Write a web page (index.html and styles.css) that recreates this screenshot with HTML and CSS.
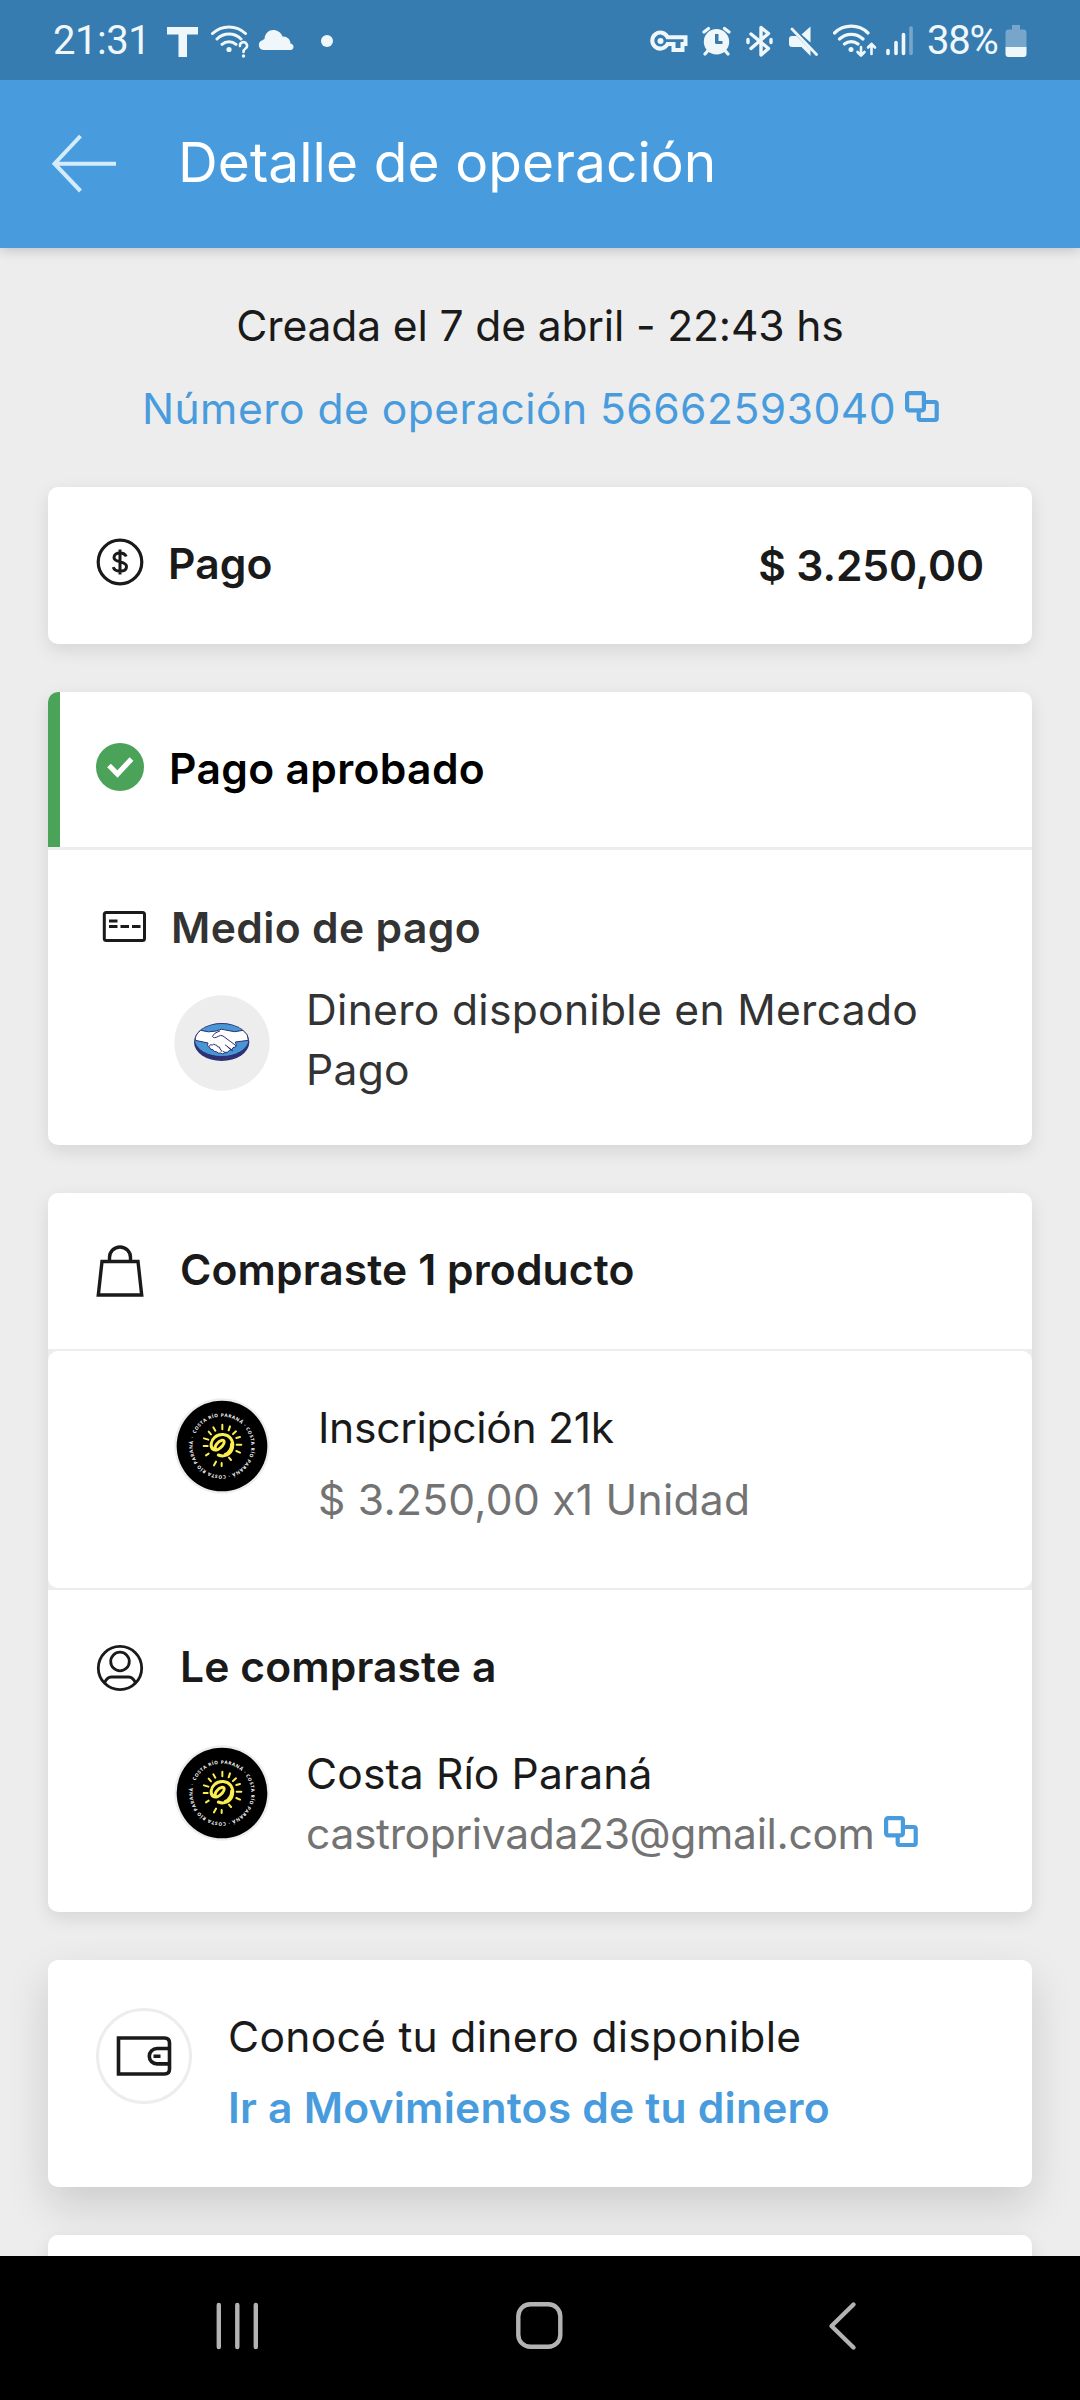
FILE: index.html
```html
<!DOCTYPE html>
<html lang="es">
<head>
<meta charset="utf-8">
<title>Detalle de operación</title>
<link rel="stylesheet" href="styles.css">
</head>
<body>
<div class="screen">
  <div class="status">
    <div class="status-group">
      <span class="clock">21:31</span>
      <svg width="31" height="80" viewBox="167 0 31 80"><path d="M167 27h31v7.500h-11V57h-8.500V34.500H167z"/></svg>
      <svg class="gap-13" width="38" height="80" viewBox="211 0 38 80">
        <g class="line" stroke-width="3"><path d="M212.500 33.500a24 24 0 0 1 33 0M217 39a17 17 0 0 1 24 0M222 44.300a10.500 10.500 0 0 1 14 0"/><path stroke-width="2.600" d="M240 46a3.500 3.500 0 1 1 5.500 2.500q-2 1.400-2 3.500"/></g>
        <circle cx="229" cy="49.500" r="2.600"/><circle cx="243.500" cy="56" r="1.700"/>
      </svg>
      <svg class="gap-9" width="37" height="80" viewBox="258 0 37 80"><path d="M263.500 50a5 5 0 0 1-1-9.800 6 6 0 0 1 2-1.200c1-12 15-11 18-2.500 4-.5 8 2.500 8 7 4 .5 4 6.500 0 6.500z"/></svg>
      <svg class="gap-26" width="12" height="80" viewBox="321 0 12 80"><circle cx="327" cy="41" r="6"/></svg>
    </div>
    <div class="status-group">
      <svg width="38" height="80" viewBox="650 0 38 80"><g class="line" stroke-width="4"><path stroke-linecap="butt" stroke-linejoin="miter" d="M667.500 37.200H685.500V44h-3v6H673.500V44h-6a8 8 0 1 1 0-6.800z"/></g><circle cx="660.500" cy="41" r="3"/></svg>
      <svg class="gap-14" width="29" height="80" viewBox="702 0 29 80"><path fill-rule="evenodd" d="M716.500 29a12.700 12.700 0 1 1 0 25.400a12.700 12.700 0 1 1 0-25.400zM715 34v8.500q0 1.500 1.500 1.500h6v-3H718.500v-7z"/><path class="line" stroke-width="3.200" d="M704 32l4.500-3.500M729 32l-4.500-3.500M708.500 50l-3.500 4M724.500 50l3.500 4"/></svg>
      <svg class="gap-15" width="28" height="80" viewBox="746 0 28 80"><path class="line" stroke-width="3.400" d="M751 34l17.500 14.500-7.500 6.500V27.500l7.500 6L751 48.500M748 39.500v3M771 39.500v3"/></svg>
      <svg class="gap-15" width="29" height="80" viewBox="789 0 29 80"><path d="M789 39q0-3 3-3h4.500l14 14v6l-9-9h-9.500q-3 0-3-3zM801.500 34.500l9-8v16z"/><path class="line" stroke-width="2.800" d="M792 29l24.500 25.500"/></svg>
      <svg class="gap-15" width="44" height="80" viewBox="833 0 44 80">
        <g class="line" stroke-width="3.200"><path d="M834.500 33a24 24 0 0 1 33.500 0M839.500 39a17 17 0 0 1 23.500 0M844.500 44a10.500 10.500 0 0 1 13.500 0"/><path stroke-width="2.600" d="M861 47v8.500m-3.500-3.500l3.500 3.700 3.500-3.700M871.500 54v-10m-3.500 3.500l3.500-3.700 3.500 3.700"/></g><circle cx="851" cy="49.500" r="2.500"/>
      </svg>
      <svg class="gap-9" width="28" height="80" viewBox="886 0 28 80"><g class="line" stroke-width="3.600"><path d="M888 50.500v3M896 42.500v11M903.500 34.500v19"/><path opacity=".35" d="M911 28v25.500"/></g></svg>
      <span class="battery-text">38%</span>
      <svg width="22" height="80" viewBox="1005 0 22 80"><path opacity=".35" d="M1012 25h8v4.500h3.500q3 0 3 3V47h-21V32.500q0-3 3-3h3.500z"/><path d="M1005.500 47h21v7q0 3-3 3h-15q-3 0-3-3z"/></svg>
    </div>
  </div>

  <header class="appbar">
    <svg width="66" height="60" viewBox="0 0 66 60"><path d="M30.500 2L4.500 29.700 30.500 57M5 29.700h61" fill="none" stroke="#d3ecfb" stroke-width="4"/></svg>
    <h1>Detalle de operación</h1>
  </header>

  <main>
    <div class="intro">
      <p class="created">Creada el 7 de abril - 22:43 hs</p>
      <a class="number"><span>Número de operación 56662593040</span>
        <svg class="copy" viewBox="0 0 34 31">
          <g id="copy" fill="none" stroke="#489cdd" stroke-width="4.200">
            <rect x="2.100" y="2.100" width="16.800" height="17.200" rx="2"/>
            <path d="M19 11h10.700a2 2 0 0 1 2 2v14a2 2 0 0 1-2 2H15.700a2 2 0 0 1-2-2V19.500"/>
          </g>
        </svg>
      </a>
    </div>

    <section class="card">
      <div class="row total">
        <svg class="icon" viewBox="0 0 48 48"><circle cx="24" cy="24" r="21.800" fill="none" stroke="#1a1a1a" stroke-width="3.200"/><path d="M30.200 18.500c-1-2.300-3.200-3.500-6.200-3.500-3.500 0-6 1.700-6 4.500 0 6 12.500 2.800 12.500 9 0 3-2.700 4.700-6.500 4.700-3.300 0-6-1.400-6.700-4M24 11.500v25" fill="none" stroke="#1a1a1a" stroke-width="3"/></svg>
        <h2>Pago</h2>
        <strong class="amount">$ 3.250,00</strong>
      </div>
    </section>

    <section class="card">
      <div class="row approved">
        <svg class="icon" viewBox="0 0 48 48"><circle cx="24" cy="24" r="24" fill="#4ba35a"/><path d="M13 22.500l8.500 8.500L35.500 16" fill="none" stroke="#fff" stroke-width="5.200"/></svg>
        <h2>Pago aprobado</h2>
      </div>
      <div class="row method">
        <svg class="icon" viewBox="0 0 48 48"><g fill="none" stroke="#1a1a1a" stroke-width="3"><rect x="8.300" y="8.500" width="40.200" height="28" rx="2"/><path d="M13 17h8.500M13 22.500h8.500M24.500 22.500h8.500M36 22.500h8.500"/></g></svg>
        <h2>Medio de pago</h2>
      </div>
      <div class="detail funds">
        <svg class="avatar" viewBox="-33 -42 288 288">
          <circle cx="111" cy="102" r="143" fill="#ededed"/>
          <ellipse cx="110" cy="99" rx="83" ry="57" fill="#2d3277"/>
          <ellipse cx="110" cy="93" rx="80" ry="48" fill="#4897d4"/>
          <path d="M47 64q25 8 46 2 17-10 33-2 22 8 48 0 17 12 16 30l-39 5 3 9q0 8-10 8-2 9-11 8-3 8-12 6-7 9-15 2-8 3-11-4-9 2-11-6-9 1-10-7-9-3-5-13l-38-8q-2-16 16-30z" fill="#fff" stroke="#2d3277" stroke-width="3"/>
          <path d="M104 66q-17 5-22 16 4 8 18 0 7-5 14-1l39 29M114 127l9 5M129 115l13 10M121 108l21 16M72 112q3-8 10-4 4-5 9 0 5-2 6 5 9-1 8 7 6 2 4 7" fill="none" stroke="#2d3277" stroke-width="3" stroke-linecap="round"/>
        </svg>
        <p>Dinero disponible en Mercado Pago</p>
      </div>
    </section>

    <section class="card">
      <div class="row bought">
        <svg class="icon bag" viewBox="0 0 48 52"><path d="M6 16.500h36L45.700 50H2.300zM13.500 16V12.500a10.500 10.500 0 0 1 21 0V16" fill="none" stroke="#1a1a1a" stroke-width="3.400"/></svg>
        <h2>Compraste 1 producto</h2>
      </div>
      <div class="product-wrap">
        <div class="detail product">
          <svg class="avatar" viewBox="42 42 288 288">
            <g id="brand">
              <circle cx="186" cy="186" r="143" fill="#ededed"/>
              <circle cx="186" cy="186" r="136" fill="#000"/>
              <path id="ring" d="M106 149.300a88 88 0 0 1 160 73.400a88 88 0 0 1-160-73.400" fill="none"/>
              <text class="ring-text"><textPath href="#ring" textLength="540">COSTA RÍO PARANÁ · COSTA RÍO PARANÁ · COSTA RÍO PARANÁ ·</textPath></text>
              <g fill="none" stroke="#fbee4f" stroke-linecap="round" stroke-linejoin="round">
                <path stroke-width="9" d="M167 195c-6-7 7-24 19-26 9-1 8 9 1 17-8 9-20 16-28 10-9-8-7-26 5-36 14-13 38-11 48 3 12 17 6 43-12 50-9 4-18 3-25 0"/>
                <path stroke-width="9" d="M196 211c13-6 19-18 19-32"/>
                <path stroke-width="6" d="M187 122v14M210 127l-4 12M228 142l-9 8M240 159l-11 3M244 182h-14M240 206l-11-5M213 228l-6-7M185 246v-9M168 233l-6 11M146 209l-8 5M143 186h-12M145 167l-13-4M153 151l-7-8M166 140l-6-10"/>
              </g>
            </g>
          </svg>
          <div>
            <p>Inscripción 21k</p>
            <p class="muted">$ 3.250,00 x1 Unidad</p>
          </div>
        </div>
      </div>
      <div class="row seller-title">
        <svg class="icon" viewBox="0 0 48 48"><g fill="none" stroke="#1a1a1a" stroke-width="2.800"><circle cx="24" cy="24" r="21.700"/><circle cx="24" cy="17.500" r="9.300"/><path d="M8.500 39.500c1.500-5 3.500-6.500 7-6.500h17c3.500 0 5.500 1.500 7 6.500"/></g></svg>
        <h2>Le compraste a</h2>
      </div>
      <div class="detail seller">
        <svg class="avatar" viewBox="42 42 288 288"><use href="#brand"/></svg>
        <div>
          <p>Costa Río Paraná</p>
          <p class="muted mail"><span>castroprivada23@gmail.com</span><svg class="copy" viewBox="0 0 34 31"><use href="#copy"/></svg></p>
        </div>
      </div>
    </section>

    <section class="card raised">
      <div class="wallet">
        <svg class="avatar" viewBox="0 0 96 96"><circle cx="48" cy="48" r="46.500" fill="none" stroke="#ededed" stroke-width="3"/><g fill="none" stroke="#1a1a1a" stroke-width="3.600"><path d="M22.500 30h46q5 0 5 5v26q0 5-5 5h-46z"/><path d="M73 40.500H61a7.700 7.700 0 0 0 0 15.400h12M57.500 48.200h7"/></g></svg>
        <div>
          <p>Conocé tu dinero disponible</p>
          <a>Ir a Movimientos de tu dinero</a>
        </div>
      </div>
    </section>

    <section class="card next"></section>
  </main>

  <nav class="navbar">
    <svg width="46" height="50" viewBox="0 0 46 50"><path d="M4.800 4v42M23.300 4v42M41.800 4v42"/></svg>
    <svg class="home" width="50" height="50" viewBox="0 0 50 50"><rect x="4.300" y="3.300" width="42" height="42.500" rx="12"/></svg>
    <svg class="back" width="34" height="50" viewBox="0 0 34 50"><path d="M28.500 3.500L6.500 25 28.500 46.500"/></svg>
  </nav>
</div>
</body>
</html>
```
FILE: styles.css
```css
* { box-sizing: border-box; margin: 0; padding: 0; }

body {
  width: 1080px;
  height: 2400px;
  overflow: hidden;
  background: #ededed;
  color: #1a1a1a;
  font: 400 42.6px/60px Inter, "Liberation Sans", sans-serif;
}

svg { display: block; flex: none; }

.screen { display: flex; flex-direction: column; height: 2400px; }

.status {
  display: flex;
  justify-content: space-between;
  height: 80px;
  padding: 0 53px;
  background: #367cb0;
  color: #f0f7fb;
  font: 400 40px/82.600px Roboto, sans-serif;
  z-index: 2;
}
.status svg { fill: #f0f7fb; }
.status .line { fill: none; stroke: #f0f7fb; stroke-linecap: round; stroke-linejoin: round; }
.status-group { display: flex; height: 80px; }
.clock { width: 114px; letter-spacing: -.5px; }
.battery-text { width: 78px; margin-left: 13px; letter-spacing: -1.200px; }
.gap-9 { margin-left: 9px; }
.gap-13 { margin-left: 13px; }
.gap-14 { margin-left: 14px; }
.gap-15 { margin-left: 15px; }
.gap-26 { margin-left: 26px; }

.appbar {
  display: flex;
  align-items: center;
  gap: 62px;
  height: 168px;
  padding-left: 50px;
  background: #489cdd;
  color: #fff;
  box-shadow: 0 2px 12px rgba(0, 0, 0, .2);
  z-index: 1;
}
.appbar h1 { padding-bottom: 5px; font-size: 55px; font-weight: 400; line-height: 70px; letter-spacing: .08px; }

main { flex: 1; overflow: hidden; }

.intro {
  display: flex;
  flex-direction: column;
  align-items: center;
  gap: 23px;
  padding: 48px 0;
}
.created { letter-spacing: -.16px; }
.number { display: flex; padding-left: 1px; letter-spacing: .46px; color: #489cdd; }
.number .copy { margin: 12px 0 0 9px; }
.copy { width: 34px; height: 31px; }

.card {
  margin: 0 48px 48px;
  border-radius: 10px;
  background: #fff;
  box-shadow: 0 6px 18px rgba(0, 0, 0, .1);
}
.raised { box-shadow: 0 18px 44px rgba(0, 0, 0, .14); }

h2 { font-size: 42.6px; font-weight: 600; letter-spacing: .1px; }
.row { display: flex; padding: 47px 48px 0; }
.icon { width: 48px; height: 48px; overflow: visible; }

.total { height: 157px; }
.total .icon { margin: 4px 24px 0 0; }
.amount { margin: 2px 0 0 auto; font-weight: 600; letter-spacing: -.12px; }

.approved {
  height: 155px;
  padding-left: 36px;
  border-left: 12px solid #4ba35a;
  border-top-left-radius: 10px;
  color: #000;
}
.approved .icon { margin: 4px 25px 0 0; }
.approved h2 { letter-spacing: .33px; }
.method { padding-top: 48px; border-top: 3px solid #ededed; color: #333; }
.method .icon { margin: 6px 27px 0 0; }
.method h2 { letter-spacing: .36px; }

.detail { display: flex; padding-left: 126px; }
.avatar { width: 96px; height: 96px; }
.funds { gap: 36px; height: 187px; padding-top: 22px; color: #333; letter-spacing: .29px; }
.funds .avatar { margin-top: 15px; }
.funds p { width: 640px; }

.bought { height: 156px; }
.bag { height: 52px; margin: 5px 36px 0 0; }
.seller-title .icon { margin: 7px 36px 0 0; }

.product-wrap { padding: 2px 0; background: #ededed; }
.product { gap: 48px; height: 237px; padding-top: 47px; border-radius: 10px; background: #fff; letter-spacing: -.32px; }
.muted { color: #737373; }
.product .muted { margin-top: 12px; letter-spacing: .25px; }

.seller { gap: 36px; height: 215px; padding-top: 47px; letter-spacing: .12px; }
.seller .avatar { margin-top: 1px; }
.mail { display: flex; letter-spacing: -.36px; }
.mail .copy { margin: 12px 0 0 9px; }

.wallet { display: flex; gap: 36px; height: 227px; padding: 47px 48px 0; letter-spacing: .27px; }
.wallet .avatar { margin-top: 1px; }
.wallet a { display: block; margin-top: 11px; color: #489cdd; font-weight: 600; letter-spacing: .21px; }

.next { height: 120px; }

.ring-text { fill: #fff; font: 700 14px "Open Sans", sans-serif; letter-spacing: 0; }

.navbar {
  display: flex;
  height: 144px;
  padding: 45px 0 0 214px;
  background: #000;
  z-index: 1;
}
.navbar svg { fill: none; stroke: #b3b3b3; stroke-width: 4.400; stroke-linecap: round; stroke-linejoin: round; }
.home { margin-left: 254px; }
.back { margin-left: 261px; }
```
